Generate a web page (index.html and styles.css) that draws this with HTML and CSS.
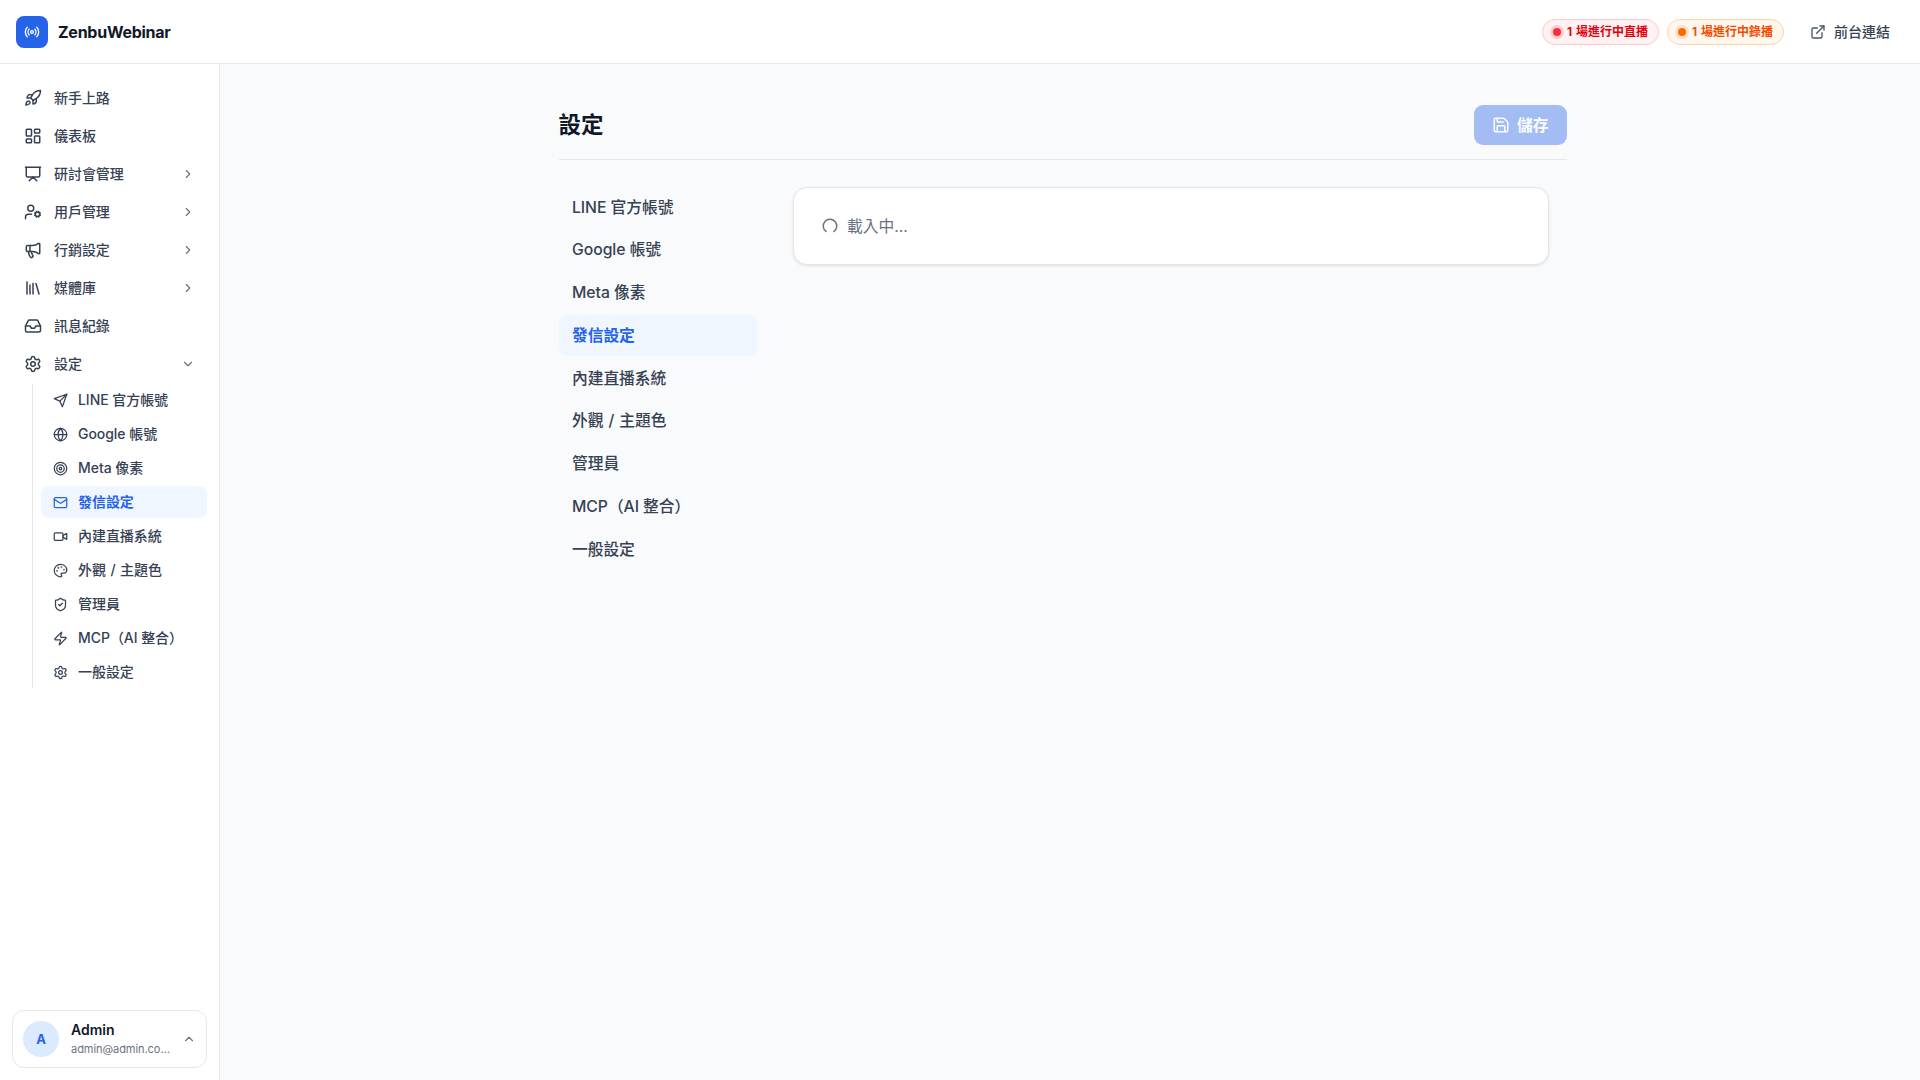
FILE: index.html
```html
<!DOCTYPE html>
<html lang="zh-Hant">

<head>
    <meta charset="UTF-8">
    <meta name="viewport" content="width=device-width, initial-scale=1.0">
    <title>設定 - ZenbuWebinar</title>
    <link rel="stylesheet" href="styles.css">
</head>

<body>
    <!-- 共用圖示 -->
    <svg class="sprite">
        <symbol id="i-right" viewBox="0 0 24 24"><path d="m9 18 6-6-6-6"/></symbol>
        <symbol id="i-gear" viewBox="0 0 24 24"><path d="M9.671 4.136a2.34 2.34 0 0 1 4.659 0 2.34 2.34 0 0 0 3.319 1.915 2.34 2.34 0 0 1 2.33 4.033 2.34 2.34 0 0 0 0 3.831 2.34 2.34 0 0 1-2.33 4.033 2.34 2.34 0 0 0-3.319 1.915 2.34 2.34 0 0 1-4.659 0 2.34 2.34 0 0 0-3.32-1.915 2.34 2.34 0 0 1-2.33-4.033 2.34 2.34 0 0 0 0-3.831A2.34 2.34 0 0 1 6.35 6.051a2.34 2.34 0 0 0 3.319-1.915"/><circle cx="12" cy="12" r="3"/></symbol>
    </svg>

    <header class="topbar">
        <div class="brand">
            <span class="logo">
                <svg viewBox="0 0 24 24"><path d="M4.9 19.1C1 15.2 1 8.8 4.9 4.9"/><path d="M7.8 16.2c-2.3-2.3-2.3-6.1 0-8.5"/><circle cx="12" cy="12" r="2"/><path d="M16.2 7.8c2.3 2.3 2.3 6.1 0 8.5"/><path d="M19.1 4.9C23 8.8 23 15.1 19.1 19"/></svg>
            </span>
            <span class="brand-name">ZenbuWebinar</span>
        </div>
        <div class="topbar-right">
            <a class="pill live"><i class="dot"></i><span>1 場進行中直播</span></a>
            <a class="pill replay"><i class="dot"></i><span>1 場進行中錄播</span></a>
            <a class="front-link">
                <svg viewBox="0 0 24 24"><path d="M15 3h6v6"/><path d="M10 14 21 3"/><path d="M18 13v6a2 2 0 0 1-2 2H5a2 2 0 0 1-2-2V8a2 2 0 0 1 2-2h6"/></svg>
                <span>前台連結</span>
            </a>
        </div>
    </header>

    <div class="layout">
        <aside class="sidebar">
            <nav class="menu">
                <a class="menu-item">
                    <svg viewBox="0 0 24 24"><path d="M4.5 16.5c-1.5 1.26-2 5-2 5s3.74-.5 5-2c.71-.84.7-2.13-.09-2.91a2.18 2.18 0 0 0-2.91-.09z"/><path d="m12 15-3-3a22 22 0 0 1 2-3.95A12.88 12.88 0 0 1 22 2c0 2.72-.78 7.5-6 11a22.35 22.35 0 0 1-4 2z"/><path d="M9 12H4s.55-3.03 2-4c1.62-1.08 5 0 5 0"/><path d="M12 15v5s3.03-.55 4-2c1.08-1.62 0-5 0-5"/></svg>
                    <span>新手上路</span>
                </a>
                <a class="menu-item">
                    <svg viewBox="0 0 24 24"><rect width="7" height="9" x="3" y="3" rx="1"/><rect width="7" height="5" x="14" y="3" rx="1"/><rect width="7" height="9" x="14" y="12" rx="1"/><rect width="7" height="5" x="3" y="16" rx="1"/></svg>
                    <span>儀表板</span>
                </a>
                <a class="menu-item">
                    <svg viewBox="0 0 24 24"><path d="M2 3h20"/><path d="M21 3v11a2 2 0 0 1-2 2H5a2 2 0 0 1-2-2V3"/><path d="m7 21 5-5 5 5"/></svg>
                    <span>研討會管理</span>
                    <svg class="chevron"><use href="#i-right"/></svg>
                </a>
                <a class="menu-item">
                    <svg viewBox="0 0 24 24"><path d="M10 15H6a4 4 0 0 0-4 4v2"/><circle cx="9" cy="7" r="4"/><circle cx="18" cy="15" r="3"/><path d="m14.305 16.53.923-.382M15.228 13.852l-.923-.383M16.852 12.228l-.383-.923M16.852 17.772l-.383.924M19.148 12.228l.383-.923M19.53 18.696l-.382-.924M20.772 13.852l.924-.383M20.772 16.148l.924.383"/></svg>
                    <span>用戶管理</span>
                    <svg class="chevron"><use href="#i-right"/></svg>
                </a>
                <a class="menu-item">
                    <svg viewBox="0 0 24 24"><path d="M11 6a13 13 0 0 0 8.4-2.8A1 1 0 0 1 21 4v12a1 1 0 0 1-1.6.8A13 13 0 0 0 11 14H5a2 2 0 0 1-2-2V8a2 2 0 0 1 2-2z"/><path d="M6 14a12 12 0 0 0 2.4 7.2 2 2 0 0 0 3.2-2.4A8 8 0 0 1 10 14"/><path d="M8 6v8"/></svg>
                    <span>行銷設定</span>
                    <svg class="chevron"><use href="#i-right"/></svg>
                </a>
                <a class="menu-item">
                    <svg viewBox="0 0 24 24"><path d="m16 6 4 14"/><path d="M12 6v14"/><path d="M8 8v12"/><path d="M4 4v16"/></svg>
                    <span>媒體庫</span>
                    <svg class="chevron"><use href="#i-right"/></svg>
                </a>
                <a class="menu-item">
                    <svg viewBox="0 0 24 24"><path d="M22 12h-6l-2 3h-4l-2-3H2"/><path d="M5.45 5.11 2 12v6a2 2 0 0 0 2 2h16a2 2 0 0 0 2-2v-6l-3.45-6.89A2 2 0 0 0 16.76 4H7.24a2 2 0 0 0-1.79 1.11z"/></svg>
                    <span>訊息紀錄</span>
                </a>
                <a class="menu-item">
                    <svg><use href="#i-gear"/></svg>
                    <span>設定</span>
                    <svg class="chevron" viewBox="0 0 24 24"><path d="m6 9 6 6 6-6"/></svg>
                </a>

                <div class="submenu">
                    <a class="submenu-item">
                        <svg viewBox="0 0 24 24"><path d="m22 2-7 20-4-9-9-4Z"/><path d="M22 2 11 13"/></svg>
                        <span>LINE 官方帳號</span>
                    </a>
                    <a class="submenu-item">
                        <svg viewBox="0 0 24 24"><circle cx="12" cy="12" r="10"/><path d="M12 2a14.5 14.5 0 0 0 0 20 14.5 14.5 0 0 0 0-20"/><path d="M2 12h20"/></svg>
                        <span>Google 帳號</span>
                    </a>
                    <a class="submenu-item">
                        <svg viewBox="0 0 24 24"><circle cx="12" cy="12" r="10"/><circle cx="12" cy="12" r="6"/><circle cx="12" cy="12" r="2"/></svg>
                        <span>Meta 像素</span>
                    </a>
                    <a class="submenu-item active">
                        <svg viewBox="0 0 24 24"><rect x="2" y="4" width="20" height="16" rx="2"/><path d="m22 7-8.991 5.727a2 2 0 0 1-2.009 0L2 7"/></svg>
                        <span>發信設定</span>
                    </a>
                    <a class="submenu-item">
                        <svg viewBox="0 0 24 24"><path d="m16 13 5.223 3.482a.5.5 0 0 0 .777-.416V7.87a.5.5 0 0 0-.752-.432L16 10.5"/><rect x="2" y="6" width="14" height="12" rx="2"/></svg>
                        <span>內建直播系統</span>
                    </a>
                    <a class="submenu-item">
                        <svg viewBox="0 0 24 24"><path d="M12 22a1 1 0 0 1 0-20 10 9 0 0 1 10 9 5 5 0 0 1-5 5h-2.25a1.75 1.75 0 0 0-1.4 2.8l.3.4a1.75 1.75 0 0 1-1.4 2.8z"/><circle cx="13.5" cy="6.5" r=".5"/><circle cx="17.5" cy="10.5" r=".5"/><circle cx="6.5" cy="12.5" r=".5"/><circle cx="8.5" cy="7.5" r=".5"/></svg>
                        <span class="spaced">外觀 / 主題色</span>
                    </a>
                    <a class="submenu-item">
                        <svg viewBox="0 0 24 24"><path d="M20 13c0 5-3.5 7.5-7.66 8.95a1 1 0 0 1-.67-.01C7.5 20.5 4 18 4 13V6a1 1 0 0 1 1-1c2 0 4.5-1.2 6.24-2.72a1.17 1.17 0 0 1 1.52 0C14.51 3.81 17 5 19 5a1 1 0 0 1 1 1z"/><path d="m9 12 2 2 4-4"/></svg>
                        <span>管理員</span>
                    </a>
                    <a class="submenu-item">
                        <svg viewBox="0 0 24 24"><path d="M4 14a1 1 0 0 1-.78-1.63l9.9-10.2a.5.5 0 0 1 .86.46l-1.92 6.02A1 1 0 0 0 13 10h7a1 1 0 0 1 .78 1.63l-9.9 10.2a.5.5 0 0 1-.86-.46l1.92-6.02A1 1 0 0 0 11 14z"/></svg>
                        <span>MCP（AI 整合）</span>
                    </a>
                    <a class="submenu-item">
                        <svg><use href="#i-gear"/></svg>
                        <span>一般設定</span>
                    </a>
                </div>
            </nav>

            <div class="user-card">
                <span class="avatar">A</span>
                <div class="user-info">
                    <div class="user-name">Admin</div>
                    <div class="user-email">admin@admin.com.tw</div>
                </div>
                <svg class="chevron" viewBox="0 0 24 24"><path d="m18 15-6-6-6 6"/></svg>
            </div>
        </aside>

        <main class="content">
            <div class="page">
                <div class="page-header">
                    <h1>設定</h1>
                    <button class="save-btn" disabled>
                        <svg viewBox="0 0 24 24"><path d="M15.2 3a2 2 0 0 1 1.4.6l3.8 3.8a2 2 0 0 1 .6 1.4V19a2 2 0 0 1-2 2H5a2 2 0 0 1-2-2V5a2 2 0 0 1 2-2z"/><path d="M17 21v-7a1 1 0 0 0-1-1H8a1 1 0 0 0-1 1v7"/><path d="M7 3v4a1 1 0 0 0 1 1h7"/></svg>
                        <span>儲存</span>
                    </button>
                </div>
                <div class="page-body">
                    <nav class="tabs">
                        <a class="tab">LINE 官方帳號</a>
                        <a class="tab">Google 帳號</a>
                        <a class="tab">Meta 像素</a>
                        <a class="tab active">發信設定</a>
                        <a class="tab">內建直播系統</a>
                        <a class="tab spaced">外觀 / 主題色</a>
                        <a class="tab">管理員</a>
                        <a class="tab">MCP（AI 整合）</a>
                        <a class="tab">一般設定</a>
                    </nav>
                    <section class="card">
                        <svg class="spinner" viewBox="0 0 24 24"><path d="M21 12a9 9 0 1 1-6.219-8.56"/></svg>
                        <span>載入中...</span>
                    </section>
                </div>
            </div>
        </main>
    </div>
</body>

</html>
```

FILE: styles.css
```css
html {
    font-size: 18px;
}

* {
    box-sizing: border-box;
}

body {
    margin: 0;
    height: 100vh;
    display: flex;
    flex-direction: column;
    overflow: hidden;
    font-family: Inter, "Noto Sans CJK TC", sans-serif;
    color: #364153;
    background-color: #f9fafb;
}

svg {
    flex-shrink: 0;
    fill: none;
    stroke: currentColor;
    stroke-width: 2;
    stroke-linecap: round;
    stroke-linejoin: round;
}

.sprite {
    display: none;
}

/* 頂部列 */
.topbar {
    height: 64px;
    flex-shrink: 0;
    display: flex;
    align-items: center;
    justify-content: space-between;
    padding: 0 30px 0 16px;
    background-color: #fff;
    border-bottom: 1px solid #e5e7eb;
}

.brand {
    display: flex;
    align-items: center;
    gap: 10px;
}

.logo {
    width: 32px;
    height: 32px;
    display: flex;
    align-items: center;
    justify-content: center;
    border-radius: 8px;
    background-color: #2563eb;
    color: #fff;
}

.logo svg {
    width: 16px;
    height: 16px;
}

.brand-name {
    font-size: 16px;
    font-weight: 700;
    letter-spacing: -0.016em;
    color: #101828;
}

.topbar-right {
    display: flex;
    align-items: center;
    gap: 8px;
}

.pill {
    height: 26px;
    display: flex;
    align-items: center;
    gap: 6px;
    padding: 0 10px;
    border: 1px solid;
    border-radius: 13px;
    font-size: 12px;
    font-weight: 700;
    word-spacing: 1px;
}

.pill span {
    padding-bottom: 2px;
}

.dot {
    width: 8px;
    height: 8px;
    border-radius: 50%;
}

.live {
    color: #e7000b;
    border-color: #ffc9c9;
    background-color: #fef2f2;
}

.live .dot {
    background-color: #fb2c36;
    box-shadow: 0 0 0 3px #ffcdd0;
}

.replay {
    color: #f54900;
    border-color: #ffd6a7;
    background-color: #fff7ed;
}

.replay .dot {
    background-color: #ff6900;
    box-shadow: 0 0 0 3px #ffdfc5;
}

.front-link {
    display: flex;
    align-items: center;
    gap: 8px;
    margin-left: 18px;
    font-size: 14px;
    font-weight: 500;
}

.front-link span {
    padding-bottom: 2px;
}

.front-link svg {
    width: 16px;
    height: 16px;
    color: #4a5565;
}

.layout {
    flex: 1;
    display: flex;
    min-height: 0;
}

/* 側邊欄 */
.sidebar {
    width: 220px;
    flex-shrink: 0;
    display: flex;
    flex-direction: column;
    justify-content: space-between;
    padding: 16px 12px 12px;
    background-color: #fff;
    border-right: 1px solid #e5e7eb;
}

.menu,
.submenu {
    display: flex;
    flex-direction: column;
    gap: 2px;
}

.menu-item,
.submenu-item {
    display: flex;
    align-items: center;
    padding: 0 12px;
    border-radius: 8px;
    font-size: 14px;
    font-weight: 500;
}

.menu-item span,
.submenu-item span {
    padding-bottom: 2px;
    letter-spacing: -0.05px;
}

.menu-item {
    height: 36px;
    gap: 12px;
}

.menu-item svg {
    width: 18px;
    height: 18px;
}

.menu-item .chevron,
.user-card .chevron {
    width: 14px;
    height: 14px;
    margin-left: auto;
    color: #6a7282;
}

.submenu {
    margin-left: 20px;
    padding-left: 8px;
    border-left: 1px solid #e5e7eb;
}

.submenu-item {
    height: 32px;
    gap: 10px;
}

.submenu-item svg {
    width: 15px;
    height: 15px;
}

.submenu-item.active,
.tab.active {
    color: #2563eb;
    background-color: #eff6ff;
    font-weight: 600;
}

.spaced {
    word-spacing: 0.06em;
}

.user-card {
    height: 58px;
    display: flex;
    align-items: center;
    gap: 12px;
    padding: 0 10px;
    border: 1px solid #e5e7eb;
    border-radius: 12px;
}

.avatar {
    width: 36px;
    height: 36px;
    flex-shrink: 0;
    display: flex;
    align-items: center;
    justify-content: center;
    border-radius: 50%;
    background-color: #dbeafe;
    color: #2563eb;
    font-size: 13px;
    font-weight: 700;
}

.user-info {
    flex: 1;
    min-width: 0;
    margin-right: -4px;
}

.user-name {
    margin-bottom: 2px;
    font-size: 14px;
    line-height: 18px;
    font-weight: 600;
    color: #101828;
}

.user-email {
    overflow: hidden;
    text-overflow: ellipsis;
    white-space: nowrap;
    font-size: 11px;
    line-height: 16px;
    letter-spacing: -0.05px;
    color: #6a7282;
}

/* 設定頁 */
.content {
    flex: 1;
    padding: 41px 15px 0 0;
}

.page {
    width: 56rem;
    margin: 0 auto;
}

.page-header {
    height: 55px;
    display: flex;
    align-items: flex-start;
    justify-content: space-between;
    border-bottom: 1px solid #e5e7eb;
}

h1 {
    margin: 0;
    font-size: 1.25rem;
    line-height: 40px;
    font-weight: 700;
    color: #101828;
}

.save-btn {
    height: 40px;
    display: flex;
    align-items: center;
    gap: 7px;
    padding: 0 1rem;
    border: none;
    border-radius: 0.5rem;
    background-color: #2563eb;
    color: #fff;
    font-family: inherit;
    font-size: 0.875rem;
    font-weight: 600;
    opacity: 0.4;
}

.save-btn span {
    padding-bottom: 2px;
}

.save-btn svg {
    width: 1rem;
    height: 1rem;
}

.page-body {
    display: flex;
    align-items: flex-start;
    gap: 2rem;
    padding: 27px 1rem 0 0;
}

.tabs {
    width: 11rem;
    display: flex;
    flex-direction: column;
    gap: 0.125rem;
}

.tab {
    padding: 9.5px 13.5px 8.5px;
    border-radius: 0.5rem;
    font-size: 0.875rem;
    line-height: 1.25rem;
    font-weight: 500;
    letter-spacing: -0.05px;
}

.card {
    flex: 1;
    height: 78px;
    display: flex;
    align-items: center;
    gap: 8.5px;
    padding: 0 1.5rem;
    border: 1px solid #e5e7eb;
    border-radius: 14px;
    background-color: #fff;
    box-shadow: 0 1px 3px rgba(0, 0, 0, 0.1);
    font-size: 0.875rem;
    color: #6a7282;
}

.card span {
    padding-bottom: 2px;
}

.spinner {
    width: 1rem;
    height: 1rem;
    transform: rotate(126deg);
}
```
